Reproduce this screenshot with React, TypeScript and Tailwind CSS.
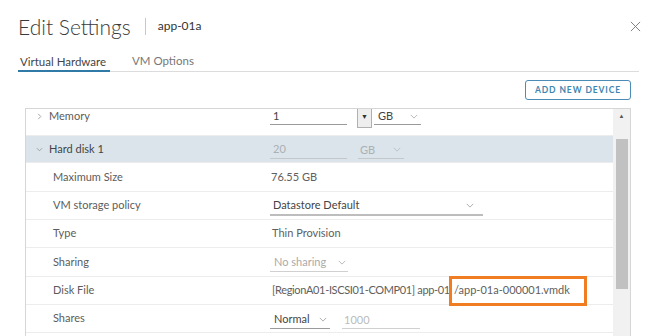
import React from "react";

const font = { fontFamily: "Lato, 'Open Sans', 'Liberation Sans', sans-serif" };

function Caret({ className = "" }: { className?: string }) {
  return (
    <svg viewBox="0 0 10 6" className={`w-[8px] h-[5px] ${className}`} fill="none" stroke="currentColor" strokeWidth="1">
      <path d="M1 1 L5 5 L9 1" />
    </svg>
  );
}

function Expand({ open }: { open?: boolean }) {
  return (
    <svg viewBox="0 0 8 8" className="w-[7px] h-[7px] text-[#9a9a9a]" fill="none" stroke="currentColor" strokeWidth="1">
      {open ? <path d="M1 2.5 L4 5.5 L7 2.5" /> : <path d="M2.5 1 L5.5 4 L2.5 7" />}
    </svg>
  );
}

function Row({ label, children, className = "", h = "h-[28px]" }: { label: React.ReactNode; children?: React.ReactNode; className?: string; h?: string }) {
  return (
    <div className={`flex items-center ${h} border-b border-[#ececec] ${className}`}>
      <div className="w-[246px] shrink-0 text-[11px] text-[#5c5c5c]">{label}</div>
      <div className="flex items-center text-[11px] text-[#606060]">{children}</div>
    </div>
  );
}

export default function App() {
  return (
    <div className="w-[653px] h-[336px] bg-white overflow-hidden relative" style={font}>
      {/* HEADER */}
      <div className="flex items-center h-[52px] pl-[18px] pr-[12px]">
        <h1 className="text-[21px] font-light text-[#3a3a3a] leading-none">Edit Settings</h1>
        <div className="w-px h-[17px] bg-[#c8c8c8] ml-[14px] mr-[12px]" />
        <span className="text-[12px] text-[#333]">app-01a</span>
        <div className="ml-auto">
          <svg viewBox="0 0 12 12" className="w-[11px] h-[11px] text-[#777]" stroke="currentColor" strokeWidth="1">
            <path d="M1 1 L11 11 M11 1 L1 11" />
          </svg>
        </div>
      </div>

      {/* TABS */}
      <div className="flex items-end ml-[18px] mr-[14px] border-b border-[#dcdcdc] h-[20px]">
        <div className="px-[2px] pb-[3px] border-b-[2px] border-[#2f7aa6] -mb-px text-[11.5px] text-[#444] leading-none w-[92px]">Virtual Hardware</div>
        <div className="ml-[22px] pb-[5px] text-[11.5px] text-[#777] leading-none">VM Options</div>
      </div>

      {/* ACTIONS */}
      <div className="flex justify-end pr-[22px] pt-[8px]">
        <button className="h-[20px] w-[106px] rounded-[3px] border border-[#4a8cb5] text-[8.5px] font-bold tracking-[0.9px] text-[#3e86b0]">
          ADD NEW DEVICE
        </button>
      </div>

      {/* TABLE */}
      <div className="ml-[25px] mt-[8px] w-[606px] h-[240px] border-l border-t border-r border-[#d6d6d6] flex overflow-hidden">
        <div className="flex-1 -mt-[6px]">
          <Row
            h="h-[33px] pb-[5px]"
            label={
              <div className="flex items-center pl-[10px] gap-[6px]">
                <Expand />
                <span>Memory</span>
              </div>
            }
          >
            <div className="w-[77px] h-[17px] border-b border-[#9a9a9a] pl-[3px] leading-[16px] text-[#444] -ml-[2px]">1</div>
            <div className="ml-[10px] w-[15px] h-[22px] bg-[#eeeeee] border border-[#b0b0b0] flex items-center justify-center">
              <span className="text-[7px] text-[#333]">▼</span>
            </div>
            <div className="ml-[2px] w-[47px] h-[17px] border-b border-[#9a9a9a] flex items-center pl-[4px] leading-[16px] text-[#444]">
              GB
              <Caret className="ml-[17px] text-[#aaa]" />
            </div>
          </Row>
          <Row
            h="h-[27px]"
            className="bg-[#dbe4ea]"
            label={
              <div className="flex items-center pl-[10px] gap-[6px]">
                <Expand open />
                <span className="text-[#444]">Hard disk 1</span>
              </div>
            }
          >
            <div className="w-[77px] h-[18px] border-b border-[#c4c8cb] pl-[3px] leading-[16px] text-[#aab0b4] -ml-[2px] mt-[2px]">20</div>
            <div className="ml-[11px] w-[46px] h-[18px] border-b border-[#c4c8cb] flex items-center pl-[2px] leading-[16px] text-[#aab0b4] mt-[2px]">
              GB
              <Caret className="ml-[18px] text-[#b5bbbf]" />
            </div>
          </Row>
          <Row label={<div className="pl-[27px]">Maximum Size</div>} h="h-[29px]">
            <span className="-ml-[1px]">76.55 GB</span>
          </Row>
          <Row label={<div className="pl-[27px]">VM storage policy</div>}>
            <div className="-ml-[2px] w-[213px] h-[19px] border-b-[2px] border-[#bdbdbd] flex items-center pl-[3px] text-[#444] mt-[2px]">
              Datastore Default
              <Caret className="ml-auto mr-[9px] text-[#999]" />
            </div>
          </Row>
          <Row label={<div className="pl-[27px]">Type</div>}>
            <span>Thin Provision</span>
          </Row>
          <Row label={<div className="pl-[27px]">Sharing</div>} h="h-[29px]">
            <div className="-ml-[2px] w-[78px] h-[18px] border-b border-[#d0d0d0] flex items-center pl-[4px] text-[#aaa] mt-[2px]">
              No sharing
              <Caret className="ml-[12px] text-[#aaa]" />
            </div>
          </Row>
          <Row label={<div className="pl-[27px]">Disk File</div>}>
            <span className="whitespace-nowrap tracking-[-0.35px]">[RegionA01-ISCSI01-COMP01] app-01a</span>
            <span className="-ml-[6px] inline-flex items-center h-[30px] w-[138px] border-[3px] border-[#f07d22] bg-white pl-[2px] whitespace-nowrap">
              /app-01a-000001.vmdk
            </span>
          </Row>
          <Row label={<div className="pl-[27px]">Shares</div>}>
            <div className="-ml-[2px] w-[60px] h-[18px] border-b border-[#9a9a9a] flex items-center pl-[4px] text-[#444] mt-[2px]">
              Normal
              <Caret className="ml-[9px] text-[#999]" />
            </div>
            <div className="ml-[12px] w-[78px] h-[18px] border-b border-[#d0d0d0] pl-[2px] text-[#bbb] leading-[17px] mt-[2px]">1000</div>
          </Row>
        </div>

        {/* SCROLLBAR */}
        <div className="w-[17px] shrink-0 bg-[#f1f1f1] flex flex-col items-center">
          <span className="text-[6px] text-[#555] mt-[4px] leading-none">▲</span>
          <div className="mt-[20px] w-[12px] h-[150px] bg-[#c1c1c1]" />
        </div>
      </div>
    </div>
  );
}
